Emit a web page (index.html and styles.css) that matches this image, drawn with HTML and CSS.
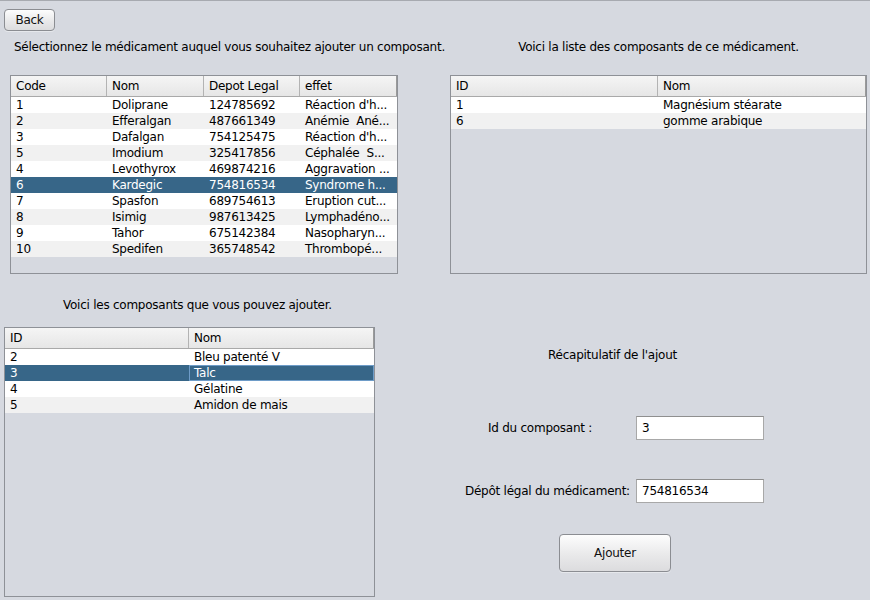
FILE: index.html
```html
<!DOCTYPE html>
<html lang="fr">
<head>
<meta charset="utf-8">
<title>Ajout composant</title>
<link rel="stylesheet" href="styles.css">
</head>
<body>
<div class="window">
  <div class="toolbar">
    <button class="btn btn-back">Back</button>
  </div>

  <div class="top">
    <section class="pane pane-meds">
      <p class="caption caption-left">Sélectionnez le médicament auquel vous souhaitez ajouter un composant.</p>
      <div class="table table-meds">
        <div class="thead cols4">
          <div class="th">Code</div><div class="th">Nom</div><div class="th">Depot Legal</div><div class="th">effet</div>
        </div>
        <div class="row cols4"><div class="td">1</div><div class="td">Doliprane</div><div class="td">124785692</div><div class="td">Réaction d'h...</div></div>
        <div class="row cols4 alt"><div class="td">2</div><div class="td">Efferalgan</div><div class="td">487661349</div><div class="td">Anémie&nbsp; Ané...</div></div>
        <div class="row cols4"><div class="td">3</div><div class="td">Dafalgan</div><div class="td">754125475</div><div class="td">Réaction d'h...</div></div>
        <div class="row cols4 alt"><div class="td">5</div><div class="td">Imodium</div><div class="td">325417856</div><div class="td">Céphalée&nbsp; S...</div></div>
        <div class="row cols4"><div class="td">4</div><div class="td">Levothyrox</div><div class="td">469874216</div><div class="td">Aggravation ...</div></div>
        <div class="row cols4 selected"><div class="td">6</div><div class="td">Kardegic</div><div class="td">754816534</div><div class="td">Syndrome h...</div></div>
        <div class="row cols4"><div class="td">7</div><div class="td">Spasfon</div><div class="td">689754613</div><div class="td">Eruption cut...</div></div>
        <div class="row cols4 alt"><div class="td">8</div><div class="td">Isimig</div><div class="td">987613425</div><div class="td">Lymphadéno...</div></div>
        <div class="row cols4"><div class="td">9</div><div class="td">Tahor</div><div class="td">675142384</div><div class="td">Nasopharyn...</div></div>
        <div class="row cols4 alt"><div class="td">10</div><div class="td">Spedifen</div><div class="td">365748542</div><div class="td">Thrombopé...</div></div>
      </div>
    </section>

    <section class="pane pane-current">
      <p class="caption caption-center">Voici la liste des composants de ce médicament.</p>
      <div class="table table-current">
        <div class="thead cols2">
          <div class="th">ID</div><div class="th">Nom</div>
        </div>
        <div class="row cols2"><div class="td">1</div><div class="td">Magnésium stéarate</div></div>
        <div class="row cols2 alt"><div class="td">6</div><div class="td">gomme arabique</div></div>
      </div>
    </section>
  </div>

  <div class="bottom">
    <section class="pane pane-avail">
      <p class="caption caption-avail">Voici les composants que vous pouvez ajouter.</p>
      <div class="table table-avail">
        <div class="thead cols2">
          <div class="th">ID</div><div class="th">Nom</div>
        </div>
        <div class="row cols2"><div class="td">2</div><div class="td">Bleu patenté V</div></div>
        <div class="row cols2 selected"><div class="td">3</div><div class="td focus">Talc</div></div>
        <div class="row cols2"><div class="td">4</div><div class="td">Gélatine</div></div>
        <div class="row cols2 alt"><div class="td">5</div><div class="td">Amidon de mais</div></div>
      </div>
    </section>

    <section class="pane pane-recap">
      <p class="recap-title">Récapitulatif de l'ajout</p>
      <div class="field field-id">
        <label class="field-label">Id du composant :</label>
        <input class="field-input" type="text" value="3">
      </div>
      <div class="field field-depot">
        <label class="field-label">Dépôt légal du médicament:</label>
        <input class="field-input" type="text" value="754816534">
      </div>
      <button class="btn btn-add">Ajouter</button>
    </section>
  </div>
</div>
</body>
</html>
```

FILE: styles.css
```css
* { box-sizing: border-box; }
html, body {
  margin: 0;
  padding: 0;
}
body {
  width: 870px;
  height: 600px;
  background: #d6d9e0;
  font-family: "DejaVu Sans", "Lucida Grande", sans-serif;
  font-size: 12px;
  letter-spacing: -0.25px;
  color: #000;
  overflow: hidden;
}
.window {
  height: 600px;
  border-top: 1px solid #a7aab0;
}
.toolbar {
  padding: 8px 0 0 4px;
  height: 31px;
}
.btn {
  font-family: inherit;
  font-size: 12px;
  letter-spacing: inherit;
  color: #111;
  border: 1px solid #8b8d92;
  border-radius: 4px;
  background: linear-gradient(#fdfdfd, #e9e9ea 55%, #dcdcde);
  box-shadow: 0 1px 0 rgba(255,255,255,0.4);
  padding: 0;
}
.btn-back {
  width: 51px;
  height: 22px;
}
.top {
  display: flex;
  padding-left: 10px;
  margin-top: 7px;
}
.caption {
  margin: 0;
  height: 16px;
  line-height: 16px;
  white-space: nowrap;
}
.pane-meds { width: 388px; }
.pane-current { width: 417px; margin-left: 52px; }
.caption-left { padding-left: 4px; margin-bottom: 20px; }
.caption-center { text-align: center; margin-bottom: 20px; }

.table {
  border: 1px solid #8e9197;
  background: #d6d9e0;
  overflow: hidden;
}
.table-meds, .table-current { height: 199px; }
.thead {
  display: grid;
  height: 21px;
  background: linear-gradient(#f5f5f5, #e6e6e6);
  border-bottom: 1px solid #a9a9a9;
}
.th {
  line-height: 20px;
  padding-left: 5px;
  border-right: 1px solid #b3b3b3;
  white-space: nowrap;
  overflow: hidden;
}
.th:last-child { border-right: 1px solid #9a9a9a; }
.row {
  display: grid;
  height: 16px;
  background: #fff;
}
.row.alt { background: #f1f1f1; }
.row.selected { background: #376688; color: #fff; }
.td {
  line-height: 16px;
  padding-left: 5px;
  white-space: nowrap;
  overflow: hidden;
}
.td.focus {
  border: 1px solid #6e9cc8;
  line-height: 14px;
  padding-left: 4px;
}
.cols4 { grid-template-columns: 96px 97px 96px 97px; }
.table-current .cols2 { grid-template-columns: 207px 1fr; }
.table-avail .cols2 { grid-template-columns: 184px 1fr; }

.bottom {
  display: flex;
  margin-top: 23px;
  padding-left: 4px;
}
.pane-avail { width: 371px; }
.caption-avail { padding-left: 59px; margin-bottom: 14px; }
.table-avail { height: 270px; }

.pane-recap {
  margin-left: 90px;
  width: 310px;
}
.recap-title {
  margin: 50px 0 0 83px;
  height: 16px;
  line-height: 16px;
}
.field {
  display: flex;
  align-items: center;
  height: 24px;
}
.field-id { margin-top: 53px; }
.field-depot { margin-top: 39px; }
.field-label { white-space: nowrap; }
.field-id .field-label { margin-left: 23px; width: 148px; }
.field-depot .field-label { width: 171px; }
.field-input {
  width: 128px;
  height: 24px;
  border: 1px solid #a8a8a8;
  border-top-color: #8f8f8f;
  background: #fff;
  font-family: inherit;
  font-size: 12px;
  letter-spacing: inherit;
  padding: 0 5px;
  outline: none;
}
.btn-add {
  display: block;
  width: 112px;
  height: 38px;
  margin: 31px 0 0 94px;
}
```
